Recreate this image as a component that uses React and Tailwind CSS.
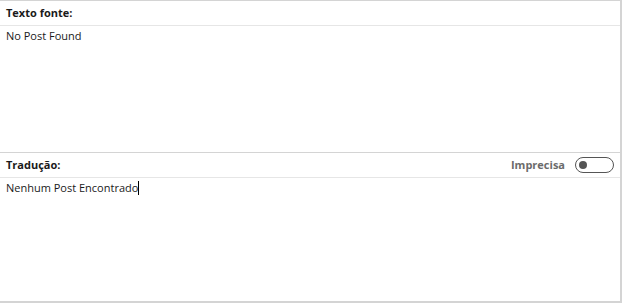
import React from 'react'

const Header = ({ title, children }) => (
  <div className="flex items-center justify-between h-[25px] px-[6px] border-b border-[#e6e6e6]">
    <span className="font-bold text-[11px] text-[#1a1a1a]">{title}</span>
    {children}
  </div>
)

export default function App() {
  return (
    <div
      className="w-[622px] h-[303px] bg-white flex flex-col border-t border-b-2 border-r-2 border-[#d4d4d4] box-border"
      style={{ fontFamily: '"Open Sans", "Noto Sans", sans-serif' }}
    >
      {/* Source panel */}
      <div className="flex flex-col h-[152px] border-b border-[#d4d4d4]">
        <Header title="Texto fonte:" />
        <div className="px-[6px] pt-[2px] text-[11px] text-[#1a1a1a]">No Post Found</div>
      </div>

      {/* Translation panel */}
      <div className="flex flex-col flex-1">
        <Header title="Tradução:">
          <div className="flex items-center gap-[10px]">
            <span className="font-bold text-[11px] text-[#6b6b6b]">Imprecisa</span>
            <div className="w-[39px] h-[16px] rounded-full border-[1.5px] border-[#555] flex items-center px-[3px]">
              <div className="w-[8px] h-[8px] rounded-full bg-[#555]" />
            </div>
          </div>
        </Header>
        <div className="px-[6px] pt-[2px] text-[11px] text-[#1a1a1a] flex items-center">
          <span>Nenhum Post Encontrado</span>
          <span className="inline-block w-px h-[14px] bg-black" />
        </div>
      </div>
    </div>
  )
}
